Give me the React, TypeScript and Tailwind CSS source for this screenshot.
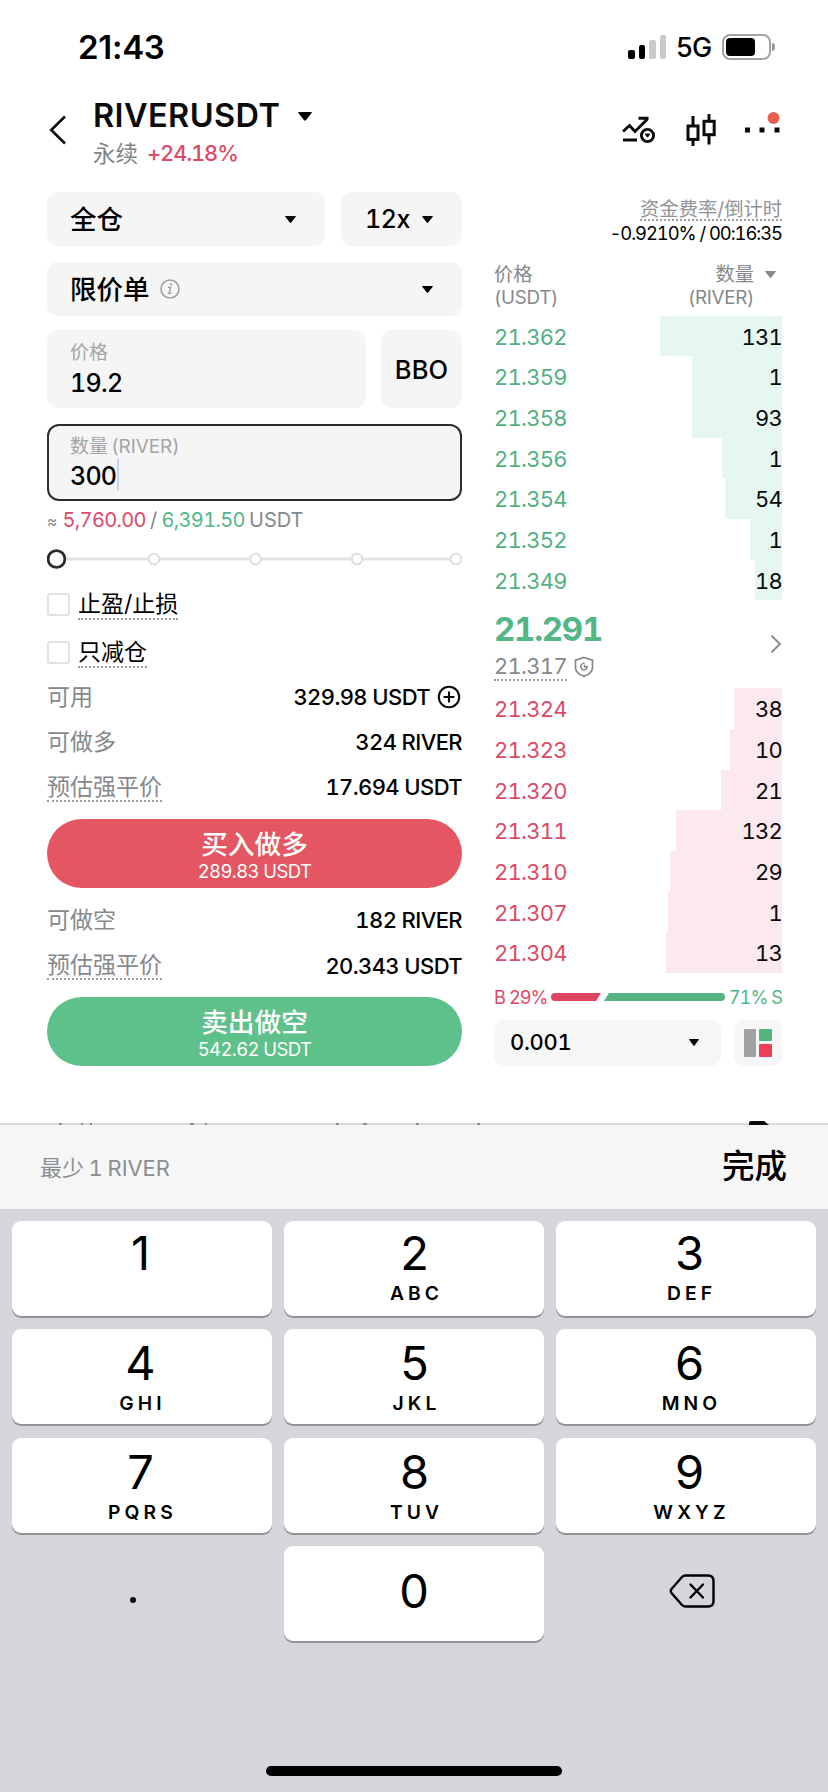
import type { ReactNode } from 'react';

type Level = { price: string; amount: string; depth: number };

const asks: Level[] = [
  { price: '21.362', amount: '131', depth: 122 },
  { price: '21.359', amount: '1', depth: 90 },
  { price: '21.358', amount: '93', depth: 90 },
  { price: '21.356', amount: '1', depth: 60 },
  { price: '21.354', amount: '54', depth: 57 },
  { price: '21.352', amount: '1', depth: 32 },
  { price: '21.349', amount: '18', depth: 27 },
];

const bids: Level[] = [
  { price: '21.324', amount: '38', depth: 48 },
  { price: '21.323', amount: '10', depth: 52 },
  { price: '21.320', amount: '21', depth: 61 },
  { price: '21.311', amount: '132', depth: 106 },
  { price: '21.310', amount: '29', depth: 112 },
  { price: '21.307', amount: '1', depth: 114 },
  { price: '21.304', amount: '13', depth: 116 },
];

const keys = [
  { digit: '1', letters: '', className: 'pt-[2px] pr-[3px]' },
  { digit: '2', letters: 'ABC', className: 'pt-[2px] pl-[1px]' },
  { digit: '3', letters: 'DEF', className: 'pt-[2px] pl-[7px]' },
  { digit: '4', letters: 'GHI', className: 'pt-[4px] pr-[3px]' },
  { digit: '5', letters: 'JKL', className: 'pt-[4px] pl-[1px]' },
  { digit: '6', letters: 'MNO', className: 'pt-[4px] pl-[7px]' },
  { digit: '7', letters: 'PQRS', className: 'pt-[4px] pr-[3px]' },
  { digit: '8', letters: 'TUV', className: 'pt-[4px] pl-[1px]' },
  { digit: '9', letters: 'WXYZ', className: 'pt-[4px] pl-[7px]' },
];

function Caret({ className = 'h-[7px] w-[11px]' }: { className?: string }) {
  return (
    <svg viewBox="0 0 11 7" preserveAspectRatio="none" className={`shrink-0 ${className}`} fill="currentColor">
      <path d="M0.6 0H10.4Q11.2 0 10.7 0.8L6.2 6.5Q5.5 7.2 4.8 6.5L0.3 0.8Q-0.2 0 0.6 0Z" />
    </svg>
  );
}

function Dotted({ children, className = '' }: { children: ReactNode; className?: string }) {
  return <span className={`border-b-2 border-dotted border-[#9b9ea1] ${className}`}>{children}</span>;
}

function StatusBar() {
  return (
    <div className="flex h-[94px] items-center justify-between pl-[78px] pr-[53px]">
      <span className="text-[33px] font-semibold leading-none tracking-[-0.3px]">21:43</span>
      <div className="flex items-center">
        <div className="flex h-6 items-end gap-[4px]">
          <i className="h-[9px] w-[6.4px] rounded-[2px] bg-black" />
          <i className="h-[14px] w-[6.4px] rounded-[2px] bg-black" />
          <i className="h-[19px] w-[6.4px] rounded-[2px] bg-[#cacaca]" />
          <i className="h-[24px] w-[6.4px] rounded-[2px] bg-[#cacaca]" />
        </div>
        <span className="ml-[10px] w-[36px] text-[27px] font-medium leading-none tracking-[-0.8px]">5G</span>
        <div className="ml-[10px] flex h-[26px] w-[49px] items-center rounded-[8px] border-2 border-[#a3a3a3] px-[2px]">
          <div className="h-[18px] w-[29px] rounded-[4px] bg-black" />
        </div>
        <div className="ml-[1px] h-[8px] w-[3px] rounded-r-full bg-[#9b9b9b]" />
      </div>
    </div>
  );
}

function Header() {
  return (
    <div className="flex h-[98px] pl-[49px] pr-[46px]">
      <svg width="18" height="32" viewBox="0 0 18 32" fill="none" stroke="#0b0b0b" strokeWidth="2.6" className="mt-5">
        <path d="M16 2.5L2.2 16L16 29.5" />
      </svg>
      <div className="ml-[26px]">
        <div className="mt-[3px] flex h-[38px] items-center">
          <h1 className="w-[189px] text-[32.5px] font-semibold leading-none tracking-[0.4px] text-[#0b0b0b]">RIVERUSDT</h1>
          <Caret className="ml-[16px] h-[9px] w-[14px]" />
        </div>
        <div className="mt-[4px] flex h-[30px] items-center text-[22px] leading-none">
          <span className="text-[22.5px] text-[#808588]">永续</span>
          <span className="ml-[9px] text-[21.8px] font-medium tabular-nums tracking-[-1.05px] text-[#dd4a66]">+24.18%</span>
        </div>
      </div>
      <div className="ml-auto flex text-[#0b0b0b]">
        <svg width="34" height="28" viewBox="0 0 34 28" fill="none" stroke="currentColor" strokeWidth="2.9" className="mt-[22px]">
          <path d="M1 15.5L7.5 9.5L13 15.5L25.5 3M16.5 2.2H26.5M1 24H15" />
          <circle cx="25.5" cy="19.5" r="6.1" />
          <path d="M23 18H28L25.5 21.3Z" fill="currentColor" strokeWidth="0.8" />
        </svg>
        <svg width="30" height="32" viewBox="0 0 30 32" fill="none" stroke="currentColor" strokeWidth="3" className="ml-[30px] mt-[20px]">
          <rect x="2" y="12" width="10" height="13.4" />
          <path d="M7 2V11M7 26V32M23 0V7M23 21.5V30.5" />
          <rect x="18" y="7.3" width="10.2" height="13.4" />
        </svg>
        <svg width="38" height="24" viewBox="0 0 38 24" className="ml-[28px] mt-[18px]">
          <path d="M1 15.5h5v5h-5zM15.5 15.5h5v5h-5zM30.5 15.5h5v5h-5z" fill="currentColor" />
          <circle cx="29.5" cy="6" r="6" fill="#e6624e" />
        </svg>
      </div>
    </div>
  );
}

function InfoRow({ label, value, dotted, className = '' }: { label: string; value: ReactNode; dotted?: boolean; className?: string }) {
  return (
    <div className={`flex items-center justify-between ${className}`}>
      {dotted ? (
        <Dotted className="-mb-[2px] pb-[1px] text-[23px] leading-[24px] text-[#85898c]">{label}</Dotted>
      ) : (
        <span className="text-[23px] leading-[24px] text-[#85898c]">{label}</span>
      )}
      <span className="flex items-center whitespace-pre text-[22px] font-medium leading-none tracking-[-0.6px]">{value}</span>
    </div>
  );
}

function Check({ label, className = '' }: { label: string; className?: string }) {
  return (
    <div className={`flex h-[30px] items-center ${className}`}>
      <div className="size-[23px] rounded-[3px] border-2 border-[#e2e2e2]" />
      <Dotted className="-mb-[3px] ml-[8px] pb-[1px] text-[23px] leading-[25px]">{label}</Dotted>
    </div>
  );
}

function TradeButton({ title, amount, className }: { title: string; amount: string; className: string }) {
  return (
    <button className={`flex h-[69px] w-full flex-col items-center rounded-full pt-[10px] text-white ${className}`}>
      <span className="text-[26.7px] font-medium leading-[30px]">{title}</span>
      <span className="mt-[3px] text-[18.5px] leading-[18px] tracking-[-0.6px]">{amount}</span>
    </button>
  );
}

function OrderForm() {
  return (
    <div className="w-[415px] tabular-nums">
      <div className="flex gap-4">
        <div className="flex h-[54px] flex-1 items-center justify-between rounded-[11px] bg-[#f5f5f5] pl-[23px] pr-[29px]">
          <span className="text-[26.5px] font-medium leading-none">全仓</span>
          <Caret />
        </div>
        <div className="flex h-[54px] w-[121px] items-center justify-between rounded-[11px] bg-[#f5f5f5] pl-[24px] pr-[29px]">
          <span className="text-[25px] font-medium leading-none tracking-[-0.4px]">12x</span>
          <Caret />
        </div>
      </div>

      <div className="mt-[16px] flex h-[54px] items-center rounded-[11px] bg-[#f5f5f5] pl-[23px] pr-[29px]">
        <span className="text-[26.5px] font-medium leading-none">限价单</span>
        <svg width="20" height="20" viewBox="0 0 20 20" fill="none" stroke="#a0a0a0" strokeWidth="1.6" className="ml-[10px]">
          <circle cx="10" cy="10" r="9" />
          <path d="M8 8.4H10.6L9.2 14.4H11.4M7.6 14.4H9.2" strokeWidth="1.4" />
          <circle cx="11" cy="5.4" r="1.1" fill="#a0a0a0" stroke="none" />
        </svg>
        <Caret className="ml-auto h-[7px] w-[11px]" />
      </div>

      <div className="mt-[14px] flex gap-[15px]">
        <div className="h-[78px] flex-1 rounded-[11px] bg-[#f5f5f5] pl-[23px] pt-[12px]">
          <p className="text-[19px] leading-[21px] text-[#a2a5a7]">价格</p>
          <p className="mt-[6px] text-[25px] font-medium leading-[28px] tracking-[-0.7px]">19.2</p>
        </div>
        <div className="flex h-[78px] w-[81px] items-center justify-center rounded-[11px] bg-[#f5f5f5] pt-[3px] text-[25.5px] font-medium tracking-[0.1px]">BBO</div>
      </div>

      <div className="mt-[16px] h-[77px] rounded-[12px] border-2 border-[#2d2d2d] bg-[#f5f5f5] pl-[21px] pt-[10px]">
        <p className="text-[19px] leading-[21px] tracking-[-0.1px] text-[#a2a5a7] [word-spacing:-1.5px]">数量 (RIVER)</p>
        <div className="flex items-center">
          <p className="mt-[5px] text-[25px] font-medium leading-[28px] tracking-[-0.8px]">300</p>
          <div className="ml-[1px] h-[32px] w-[2px] bg-[#c9d2f2]" />
        </div>
      </div>

      <p className="mt-[6px] h-[26px] text-[20px] leading-[26px] text-[#85898c] [word-spacing:-1.2px]">
        <span className="text-[16px]">≈</span> <span className="ml-[1px] tracking-[-0.65px] text-[#dd4a66]">5,760.00</span> /{' '}
        <span className="tracking-[-0.65px] text-[#53b685]">6,391.50</span> USDT
      </p>

      <svg width="417" height="22" viewBox="0 0 417 22" className="mt-[15px] block">
        <path d="M20 11H410" stroke="#e2e2e2" strokeWidth="3" />
        <g fill="#fff" stroke="#dfdfdf" strokeWidth="2">
          <circle cx="107" cy="11" r="5.3" />
          <circle cx="208.5" cy="11" r="5.3" />
          <circle cx="310" cy="11" r="5.3" />
          <circle cx="409" cy="11" r="5.3" />
        </g>
        <circle cx="9.5" cy="11" r="8.4" fill="#fff" stroke="#2b2b2b" strokeWidth="2.8" />
      </svg>

      <Check label="止盈/止损" className="mt-[19px]" />
      <Check label="只减仓" className="mt-[18px]" />

      <InfoRow
        label="可用"
        className="mt-[10px] h-[40px]"
        value={
          <>
            329.98 USDT
            <svg width="24" height="24" viewBox="0 0 24 24" fill="none" stroke="#0b0b0b" strokeWidth="2.1" className="ml-[7px] mr-[1px]">
              <circle cx="12" cy="12" r="10.2" />
              <path d="M12 6.6V17.4M6.6 12H17.4" />
            </svg>
          </>
        }
      />
      <InfoRow label="可做多" className="mt-[4px] h-[42px]" value="324 RIVER" />
      <InfoRow label="预估强平价" dotted className="mt-[2px] h-[44px]" value="17.694 USDT" />
      <TradeButton title="买入做多" amount="289.83 USDT" className="mt-[9.5px] bg-[#e45762]" />
      <InfoRow label="可做空" className="mt-[11px] h-[42px]" value="182 RIVER" />
      <InfoRow label="预估强平价" dotted className="mt-[3px] h-[44px]" value="20.343 USDT" />
      <TradeButton title="卖出做空" amount="542.62 USDT" className="mt-[9px] bg-[#5ec08b]" />
    </div>
  );
}

function BookRow({ level, side }: { level: Level; side: 'ask' | 'bid' }) {
  const green = side === 'ask';
  return (
    <div className="flex h-[40.7px] items-stretch justify-between text-[22px] leading-[42px] tracking-[-0.75px]">
      <span className={green ? 'text-[#53b082]' : 'text-[#dd4a66]'}>{level.price}</span>
      <div
        className={`flex justify-end text-[#0b0b0b] ${green ? 'bg-[#e6f7f1]' : 'bg-[#fbe9ed]'}`}
        style={{ width: level.depth }}
      >
        {level.amount}
      </div>
    </div>
  );
}

function OrderBook() {
  return (
    <div className="w-[288px] tabular-nums">
      <div className="flex flex-col items-end pt-[7px]">
        <Dotted className="text-[19.3px] leading-[20px] text-[#909396]">资金费率/倒计时</Dotted>
        <span className="mt-[1px] text-[18.4px] leading-[22px] tracking-[-1.05px]">-0.9210% / 00:16:35</span>
      </div>
      <div className="mt-[19px] flex h-[52px] justify-between text-[19.3px] leading-[23px] text-[#85898c]">
        <div>
          价格
          <br />
          <span className="text-[18.8px] tracking-[-0.3px]">(USDT)</span>
        </div>
        <div className="flex">
          <div className="text-right">
            数量
            <br />
            <span className="text-[18.8px] tracking-[-0.3px]">(RIVER)</span>
          </div>
          <Caret className="ml-[11px] mr-[6px] mt-[8px] h-[7px] w-[11px]" />
        </div>
      </div>

      <div className="mt-[0.5px]">
        {asks.map((level) => (
          <BookRow key={level.price} level={level} side="ask" />
        ))}
      </div>

      <div className="flex h-[88px] items-center justify-between">
        <div className="pt-[3px]">
          <p className="text-[33px] font-bold leading-[36px] tracking-[-1.25px] text-[#53b685]">21.291</p>
          <div className="mt-[7px] flex items-center">
            <Dotted className="text-[22px] leading-[25px] tracking-[-0.75px] text-[#85898c]">21.317</Dotted>
            <svg width="20" height="22" viewBox="0 0 20 22" fill="none" stroke="#85898c" strokeWidth="1.7" className="ml-[7px]">
              <path d="M10 1.5L18.5 4.2V11.5C18.5 15.5 15 18.6 10 20.4C5 18.6 1.5 15.5 1.5 11.5V4.2Z" />
              <path d="M10.6 7.4A3.3 3.3 0 1 0 13.3 10.6L10.6 11V8.8" strokeWidth="1.5" />
            </svg>
          </div>
        </div>
        <svg width="14" height="20" viewBox="0 0 14 20" fill="none" stroke="#85898c" strokeWidth="1.9">
          <path d="M3.5 1.8L12 10L3.5 18.2" />
        </svg>
      </div>

      {bids.map((level) => (
        <BookRow key={level.price} level={level} side="bid" />
      ))}

      <div className="mt-[11.5px] flex h-[24px] items-center justify-between whitespace-nowrap text-[18.2px] leading-none tracking-[-0.95px]">
        <span className="text-[#dd4a66]">B 29%</span>
        <svg width="174" height="8" viewBox="0 0 174 8" className="shrink-0">
          <path d="M4 0H50L45 8H4A4 4 0 0 1 4 0Z" fill="#df4560" />
          <path d="M58 0H170A4 4 0 0 1 170 8H53Z" fill="#53b481" />
        </svg>
        <span className="text-[#53b685]">71% S</span>
      </div>

      <div className="mt-[11px] flex justify-between">
        <div className="flex h-[46px] w-[227px] items-center justify-between rounded-[10px] bg-[#f6f6f6] pl-[16px] pr-[22px]">
          <span className="text-[22px] font-medium tracking-[-0.3px]">0.001</span>
          <Caret className="h-[7px] w-[10px]" />
        </div>
        <div className="flex h-[46px] w-[48px] items-center justify-center gap-[3px] rounded-[10px] bg-[#f6f6f6]">
          <div className="h-[28px] w-[12px] rounded-[1px] bg-[#a0a3a6]" />
          <div className="flex flex-col gap-[3px]">
            <div className="h-[12.5px] w-[12.5px] rounded-[1px] bg-[#53b481]" />
            <div className="h-[12.5px] w-[12.5px] rounded-[1px] bg-[#ec3f5c]" />
          </div>
        </div>
      </div>
    </div>
  );
}

function Key({ digit, letters, className = '' }: { digit: string; letters?: string; className?: string }) {
  return (
    <div className={`flex h-[95px] flex-col items-center rounded-[9px] bg-white shadow-[0_2px_0_#919397] ${className}`}>
      <span className="text-[47px] leading-[60px]">{digit}</span>
      {letters && (
        <span className="mt-[-2px] pl-[4px] text-[19.3px] font-semibold leading-[24px] tracking-[4.1px]">{letters}</span>
      )}
    </div>
  );
}

function Keyboard() {
  return (
    <div className="flex h-[583px] flex-col items-center bg-[#d4d6dc] px-[12px] pt-[12px]">
      <div className="grid w-full grid-cols-3 gap-x-[12px] gap-y-[13.3px]">
        {keys.map((k) => (
          <Key key={k.digit} {...k} />
        ))}
        <div className="flex h-[95px] items-center justify-center pr-[18px] pt-[14px]">
          <span className="size-[6px] rounded-full bg-black" />
        </div>
        <Key digit="0" className="pt-[15px]" />
        <div className="flex h-[95px] items-center justify-center pb-[5px] pl-[11px]">
          <svg width="46" height="34" viewBox="0 0 46 34" fill="none" stroke="#000" strokeWidth="2.4" strokeLinecap="round" strokeLinejoin="round">
            <path d="M16.5 1.5H39Q44.5 1.5 44.5 7V27Q44.5 32.5 39 32.5H16.5Q14.5 32.5 13 31L2.5 19Q1 17 2.5 15L13 3Q14.5 1.5 16.5 1.5Z" />
            <path d="M21.5 10.5L34 23.5M34 10.5L21.5 23.5" />
          </svg>
        </div>
      </div>
      <div className="mt-auto mb-[16px] h-[10px] w-[296px] rounded-full bg-black" />
    </div>
  );
}

export default function App() {
  return (
    <div className="h-[1792px] w-[828px] overflow-hidden bg-white font-['Inter','Noto_Sans_CJK_SC',sans-serif] text-black">
      <StatusBar />
      <Header />
      <main className="flex h-[929px] justify-between pl-[47px] pr-[46px]">
        <OrderForm />
        <OrderBook />
      </main>
      {/* top edge of the tab strip that the keyboard covers */}
      <svg width="828" height="4" viewBox="0 0 828 4" className="relative z-10 -mb-[2px] block">
        <path d="M749 4V2Q749 0 751 0H764L769 4Z" fill="#0b0b0b" />
        <path d="M59 3h3M81 3h2M90 3h2M190 3h4M205 3h2M336 3h3M363 3h4M416 3h3M477 3h3" stroke="#777" strokeWidth="1.6" />
      </svg>
      <div className="flex h-[86px] items-center justify-between border-t-2 border-[#dcdcde] bg-[#f6f6f7] pl-[40px] pr-[41px] pt-[1px]">
        <span className="text-[22px] leading-none tabular-nums tracking-[-0.1px] text-[#8b8e91] [word-spacing:-1px]">最少 1 RIVER</span>
        <span className="text-[32.5px] font-medium leading-none">完成</span>
      </div>
      <Keyboard />
    </div>
  );
}
